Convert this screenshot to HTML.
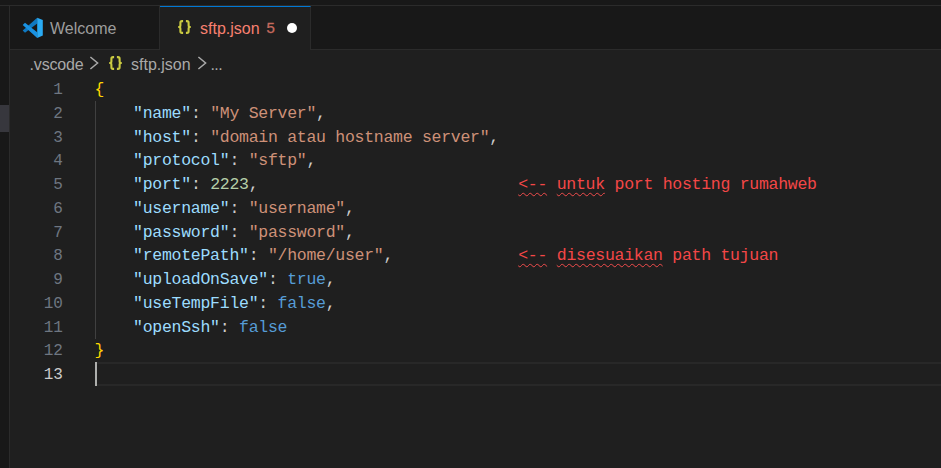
<!DOCTYPE html>
<html><head><meta charset="utf-8">
<style>
html,body{margin:0;padding:0;background:#1f1f1f;}
body{width:941px;height:468px;position:relative;overflow:hidden;font-family:"Liberation Sans",sans-serif;}
.abs{position:absolute;}
#top{left:0;top:0;width:941px;height:5px;background:#181818;border-bottom:1px solid #2b2b2b;}
#side{left:0;top:6px;width:9px;height:462px;background:#181818;border-right:1px solid #2b2b2b;}
#sel{left:0;top:105px;width:9px;height:27px;background:#37373d;}
#tabs{left:10px;top:6px;width:931px;height:43px;background:#181818;border-bottom:1px solid #2b2b2b;}
#tab1{left:10px;top:6px;width:149px;height:43px;border-right:1px solid #2b2b2b;}
#tab2{left:160px;top:6px;width:151px;height:44px;background:#1f1f1f;border-right:1px solid #2b2b2b;border-top:1px solid #0078d4;box-sizing:border-box;}
.ui{font-size:16px;white-space:pre;line-height:20px;}
#welcome{left:50px;top:18.6px;color:#9d9d9d;}
#tname{left:200px;top:18.6px;color:#f88070;}
#tbadge{left:266.6px;top:19.2px;color:#c66a5e;font-size:15.4px;-webkit-text-stroke:0.3px #c66a5e;}
#dot{left:286.7px;top:22.8px;width:10.7px;height:10.7px;border-radius:50%;background:#fff;}
.json{font-family:"Liberation Mono",monospace;font-weight:bold;color:#cbcb41;font-size:14.4px;letter-spacing:-2.2px;}
#jic1{left:177px;top:16.5px;}
#bc{left:0;top:50px;height:27px;}
.bct{color:#a9a9a9;font-size:16px;top:55px;line-height:20px;white-space:pre;}
#code{left:0;top:79px;width:941px;}
.ln{position:absolute;left:0;width:941px;height:23.75px;}
.num{position:absolute;right:878px;top:0;color:#6e7681;font-family:"Liberation Mono",monospace;font-size:16px;line-height:23.75px;letter-spacing:0.025px;}
.txt{position:absolute;left:94.6px;top:-0.8px;color:#cccccc;font-family:"Liberation Mono",monospace;font-size:16.5px;line-height:23.75px;letter-spacing:-0.275px;white-space:pre;}
.k{color:#9cdcfe}.s{color:#ce9178}.n{color:#b5cea8}.b{color:#569cd6}.y{color:#ffd700}.r{color:#f44747}
.sq{text-decoration:underline wavy #f14c4c 1.4px;text-underline-offset:2.6px;}
#guide{left:95px;top:101.25px;width:1px;height:237.5px;background:#404040;}
#cl{left:96px;top:362px;width:845px;height:24px;border-top:2px solid #282828;border-bottom:2px solid #282828;box-sizing:border-box;}
#cursor{left:95px;top:362px;width:2px;height:24px;background:#aeafad;}
</style></head><body>
<div class="abs" id="top"></div>
<div class="abs" id="side"></div>
<div class="abs" id="sel"></div>
<div class="abs" id="tabs"></div>
<div class="abs" id="tab1"></div>
<div class="abs" id="tab2"></div>
<svg class="abs" style="left:18px;top:13px" width="30" height="30" viewBox="0 0 30 30">
<polygon points="19.2,4.8 19.2,10.6 7.0,19.7 4.7,17.5" fill="#0f79c2"/>
<polygon points="7.0,9.7 19.2,19.2 19.2,25.0 4.7,12.0" fill="#1a92e2"/>
<polygon points="19.2,4.8 24.8,7.1 24.8,22.5 19.2,25.0" fill="#2aabf4"/>
</svg>
<div class="abs ui" id="welcome">Welcome</div>
<svg class="abs" style="left:174px;top:16px" width="22" height="22" viewBox="0 0 22 22"><g fill="none" stroke="#cbcb41" stroke-width="2.1" stroke-linejoin="round"><path d="M9.1,5.1 H8 Q6.4,5.1 6.4,6.7 V9.3 Q6.4,11 5.0,11 Q6.4,11 6.4,12.7 V15.3 Q6.4,16.9 8,16.9 H9.1"/><path d="M11.9,5.1 H13 Q14.6,5.1 14.6,6.7 V9.3 Q14.6,11 16.0,11 Q14.6,11 14.6,12.7 V15.3 Q14.6,16.9 13,16.9 H11.9"/></g></svg>
<div class="abs ui" id="tname">sftp.json</div>
<svg class="abs" style="left:260px;top:14px" width="24" height="26"><text x="6.5" y="19.4" font-family="Liberation Sans" font-size="15" fill="#c66a5e" stroke="#c66a5e" stroke-width="0.3">5</text></svg>
<div class="abs" id="dot"></div>

<div class="abs bct" style="left:29.5px;letter-spacing:-0.15px">.vscode</div>
<svg class="abs" style="left:89px;top:56px" width="10" height="14" viewBox="0 0 10 14"><polyline points="1.4,1.0 8.6,7.0 1.4,13.0" fill="none" stroke="#a9a9a9" stroke-width="1.5"/></svg>
<svg class="abs" style="left:105.1px;top:52.1px" width="22" height="22" viewBox="0 0 22 22"><g fill="none" stroke="#cbcb41" stroke-width="2.1" stroke-linejoin="round"><path d="M9.1,5.1 H8 Q6.4,5.1 6.4,6.7 V9.3 Q6.4,11 5.0,11 Q6.4,11 6.4,12.7 V15.3 Q6.4,16.9 8,16.9 H9.1"/><path d="M11.9,5.1 H13 Q14.6,5.1 14.6,6.7 V9.3 Q14.6,11 16.0,11 Q14.6,11 14.6,12.7 V15.3 Q14.6,16.9 13,16.9 H11.9"/></g></svg>
<div class="abs bct" style="left:131px">sftp.json</div>
<svg class="abs" style="left:197px;top:56px" width="10" height="14" viewBox="0 0 10 14"><polyline points="1.4,1.0 8.6,7.0 1.4,13.0" fill="none" stroke="#a9a9a9" stroke-width="1.5"/></svg>
<div class="abs bct" style="left:210.5px;letter-spacing:-0.6px">...</div>

<div class="abs" id="cl"></div>
<div class="abs" id="guide"></div>
<div class="abs" id="code">
<div class="ln" style="top:0px"><span class="num">1</span><span class="txt"><span class="y">{</span></span></div>
<div class="ln" style="top:23.75px"><span class="num">2</span><span class="txt">    <span class="k">"name"</span>: <span class="s">"My Server"</span>,</span></div>
<div class="ln" style="top:47.5px"><span class="num">3</span><span class="txt">    <span class="k">"host"</span>: <span class="s">"domain atau hostname server"</span>,</span></div>
<div class="ln" style="top:71.25px"><span class="num">4</span><span class="txt">    <span class="k">"protocol"</span>: <span class="s">"sftp"</span>,</span></div>
<div class="ln" style="top:95px"><span class="num">5</span><span class="txt">    <span class="k">"port"</span>: <span class="n">2223</span>,                           <span class="r"><span class="sq">&lt;--</span> <span class="sq">untuk</span> port hosting rumahweb</span></span></div>
<div class="ln" style="top:118.75px"><span class="num">6</span><span class="txt">    <span class="k">"username"</span>: <span class="s">"username"</span>,</span></div>
<div class="ln" style="top:142.5px"><span class="num">7</span><span class="txt">    <span class="k">"password"</span>: <span class="s">"password"</span>,</span></div>
<div class="ln" style="top:166.25px"><span class="num">8</span><span class="txt">    <span class="k">"remotePath"</span>: <span class="s">"/home/user"</span>,             <span class="r"><span class="sq">&lt;--</span> <span class="sq">disesuaikan</span> path tujuan</span></span></div>
<div class="ln" style="top:190px"><span class="num">9</span><span class="txt">    <span class="k">"uploadOnSave"</span>: <span class="b">true</span>,</span></div>
<div class="ln" style="top:213.75px"><span class="num">10</span><span class="txt">    <span class="k">"useTempFile"</span>: <span class="b">false</span>,</span></div>
<div class="ln" style="top:237.5px"><span class="num">11</span><span class="txt">    <span class="k">"openSsh"</span>: <span class="b">false</span></span></div>
<div class="ln" style="top:261.25px"><span class="num">12</span><span class="txt"><span class="y">}</span></span></div>
<div class="ln" style="top:285px"><span class="num" style="color:#cccccc">13</span><span class="txt"></span></div>
</div>
<div class="abs" id="cursor"></div>
</body></html>
